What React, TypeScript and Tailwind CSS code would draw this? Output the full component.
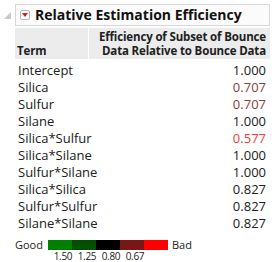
import React from 'react';

const rows: { term: string; value: string; color: string }[] = [
  { term: 'Intercept', value: '1.000', color: 'text-[#202020]' },
  { term: 'Silica', value: '0.707', color: 'text-[#8c3b36]' },
  { term: 'Sulfur', value: '0.707', color: 'text-[#8c3b36]' },
  { term: 'Silane', value: '1.000', color: 'text-[#202020]' },
  { term: 'Silica*Sulfur', value: '0.577', color: 'text-[#f03c3c]' },
  { term: 'Silica*Silane', value: '1.000', color: 'text-[#202020]' },
  { term: 'Sulfur*Silane', value: '1.000', color: 'text-[#202020]' },
  { term: 'Silica*Silica', value: '0.827', color: 'text-[#202020]' },
  { term: 'Sulfur*Sulfur', value: '0.827', color: 'text-[#202020]' },
  { term: 'Silane*Silane', value: '0.827', color: 'text-[#202020]' },
];

export default function App() {
  return (
    <div className="w-[272px] h-[262px] bg-white text-[#202020] font-['Open_Sans',sans-serif] overflow-hidden">
      <div className="flex items-center pt-[4px] pr-[2px]">
        <svg width="15" height="10" viewBox="0 0 15 10" className="shrink-0">
          <path d="M4 9 L11 2 L11 9 Z" fill="#c8c8c8" />
        </svg>
        <div className="flex-1 flex items-center h-[22px] border border-[#d8d8d8] bg-[#fbfbfb] pl-[4px]">
          <div className="w-[10px] h-[10px] rounded-[2px] border border-[#b8b8b8] bg-white flex items-center justify-center">
            <svg width="6" height="4" viewBox="0 0 6 4">
              <path d="M0 0 L6 0 L3 4 Z" fill="#e01818" />
            </svg>
          </div>
          <span className="ml-[5px] text-[14px] font-bold leading-none whitespace-nowrap text-[#111]">Relative Estimation Efficiency</span>
        </div>
      </div>

      <div className="ml-[15px] mr-[2px] mt-[2px]">
        <div className="flex bg-[#ececec] h-[31px] text-[11.5px] font-bold leading-[14px] whitespace-nowrap tracking-[-0.15px]">
          <div className="w-[74px] border-r border-white flex items-end pl-[2px] pb-[1px]">Term</div>
          <div className="flex-1 flex flex-col items-end justify-end pr-[4px] pb-[1px]">
            <span>Efficiency of Subset of Bounce</span>
            <span>Data Relative to Bounce Data</span>
          </div>
        </div>
        <div className="pt-[3px]">
          {rows.map((r) => (
            <div key={r.term} className="flex justify-between h-[17px] items-center text-[13px] pl-[3px] pr-[4px]">
              <span>{r.term}</span>
              <span className={r.color}>{r.value}</span>
            </div>
          ))}
        </div>
      </div>

      <div className="ml-[15px] mt-[7px] flex items-center text-[11px] leading-none">
        <span>Good</span>
        <div className="ml-[5px] flex h-[10px]">
          <div className="w-[24px] bg-[#008000]" />
          <div className="w-[24px] bg-[#005000]" />
          <div className="w-[24px] bg-black" />
          <div className="w-[24px] bg-[#7a1616]" />
          <div className="w-[24px] bg-[#ff0000]" />
        </div>
        <span className="ml-[4px]">Bad</span>
      </div>
      <div className="ml-[51px] flex text-[10px] leading-[11px] mt-[1px] tracking-[-0.3px]">
        <span className="w-[24px] text-center">1.50</span>
        <span className="w-[24px] text-center">1.25</span>
        <span className="w-[24px] text-center">0.80</span>
        <span className="w-[24px] text-center">0.67</span>
      </div>
    </div>
  );
}
